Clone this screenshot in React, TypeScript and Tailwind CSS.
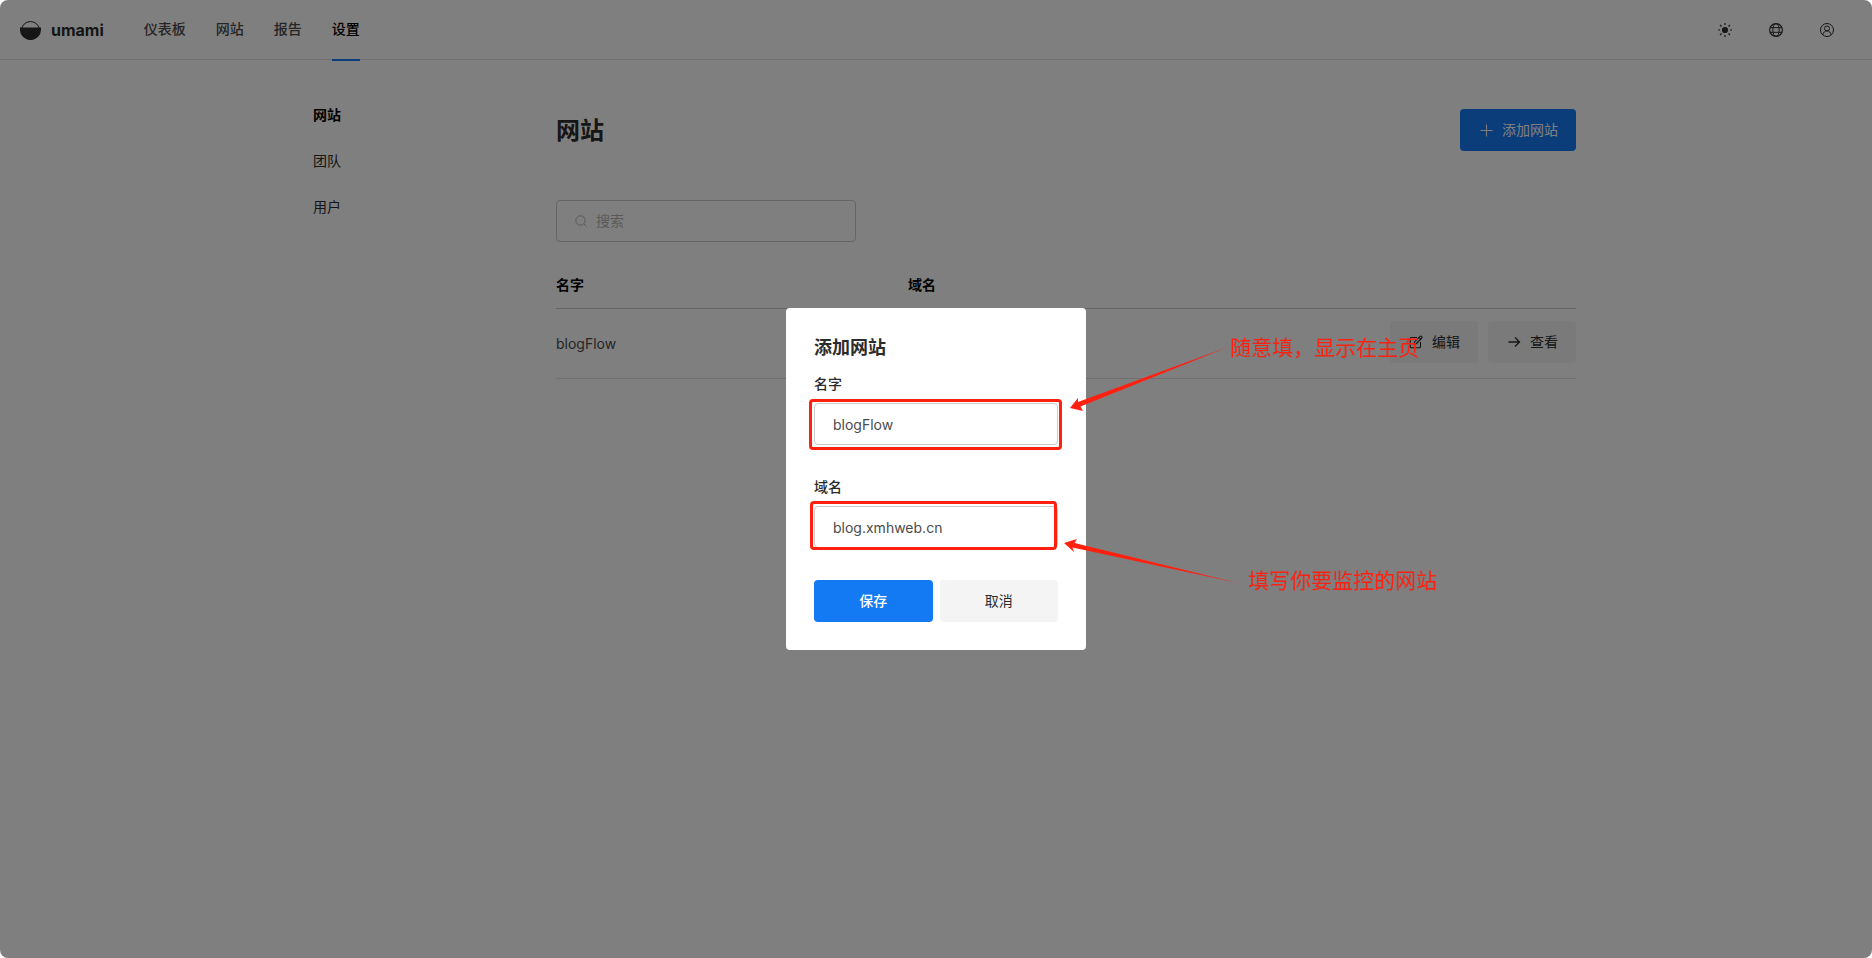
import { ReactNode, useState } from 'react';

const NAV_ITEMS = ['仪表板', '网站', '报告', '设置'];
const MENU_ITEMS = ['网站', '团队', '用户'];

function Logo() {
  return (
    <svg className="w-[21px] h-[21px]" viewBox="0 0 21 21">
      <circle cx="10.5" cy="10.5" r="9" fill="none" stroke="#2c2c2c" strokeWidth="1" />
      <path d="M0 7.500h21v2.500a10.500 10 0 0 1-21 0z" fill="#2c2c2c" />
    </svg>
  );
}

function SunIcon() {
  return (
    <svg className="w-3.5 h-3.5" viewBox="0 0 14 14" fill="none" stroke="currentColor" strokeWidth="1.2">
      <circle cx="7" cy="7" r="3.1" fill="currentColor" stroke="none" />
      <path d="M7 0v2M7 12v2M0 7h2M12 7h2M2 2l1.5 1.5M10.5 10.5L12 12M2 12l1.5-1.5M10.5 3.5L12 2" />
    </svg>
  );
}

function GlobeIcon() {
  return (
    <svg className="w-3.5 h-3.5" viewBox="0 0 14 14" fill="none" stroke="currentColor" strokeWidth="1">
      <circle cx="7" cy="7" r="6.4" strokeWidth="1.200" />
      <ellipse cx="7" cy="7" rx="3.2" ry="6.4" />
      <path d="M1.200 4.700h11.600M1.200 9.300h11.600" />
    </svg>
  );
}

function ProfileIcon() {
  return (
    <svg className="w-3.5 h-3.5" viewBox="0 0 14 14" fill="none" stroke="currentColor" strokeWidth="1">
      <circle cx="7" cy="7" r="6.5" />
      <circle cx="7" cy="5.4" r="2.5" />
      <path d="M2.9 11.8c.3-2.3 1.9-3.9 4.1-3.9s3.8 1.6 4.1 3.9" />
    </svg>
  );
}

function PlusIcon() {
  return (
    <svg className="w-4 h-4" viewBox="0 0 16 16" fill="none" stroke="currentColor">
      <path d="M8.5 2.5v12M2.5 8.5h12" />
    </svg>
  );
}

function SearchIcon() {
  return (
    <svg className="w-4 h-4 shrink-0" viewBox="0 0 16 16" fill="none" stroke="currentColor">
      <circle cx="7.5" cy="7.5" r="4.7" />
      <path d="M10.9 10.9l2.6 2.6" />
    </svg>
  );
}

function EditIcon() {
  return (
    <svg className="w-4 h-4" viewBox="0 0 16 16" fill="none" stroke="currentColor" strokeWidth="1.1">
      <path d="M9 3.5H3.2a1 1 0 0 0-1 1v8.3a1 1 0 0 0 1 1h8.3a1 1 0 0 0 1-1V8" />
      <path d="M6 10.2l.5-2.3 5.6-5.6a1 1 0 0 1 1.4 0l.3.3a1 1 0 0 1 0 1.4L8.3 9.7z" />
      <path d="M11 3.4l1.8 1.8" />
    </svg>
  );
}

function ArrowRightIcon() {
  return (
    <svg className="w-4 h-4" viewBox="0 0 16 16" fill="none" stroke="currentColor" strokeWidth="1.3">
      <path d="M2.5 8h11M9 3.5L13.5 8 9 12.5" />
    </svg>
  );
}

function RowButton({ icon, children }: { icon: ReactNode; children: ReactNode }) {
  return (
    <button className="flex items-center gap-2 h-[42px] px-[18px] rounded bg-[#f4f4f4] text-[#2c2c2c]">
      {icon}
      {children}
    </button>
  );
}

interface FieldProps {
  id: string;
  label: string;
  value: string;
  onChange: (value: string) => void;
  children: ReactNode;
}

function Field({ id, label, value, onChange, children }: FieldProps) {
  return (
    <div className="relative mb-8">
      <label htmlFor={id} className="block h-[29px] leading-5 font-medium text-[#2c2c2c]">
        {label}
      </label>
      <input
        id={id}
        value={value}
        onChange={(e) => onChange(e.target.value)}
        className="block w-full h-[42px] px-[18px] border border-[#cacaca] rounded text-[#4b4b4b] outline-none"
      />
      {children}
    </div>
  );
}

function AddWebsiteModal() {
  const [name, setName] = useState('blogFlow');
  const [domain, setDomain] = useState('blog.xmhweb.cn');

  return (
    <div className="fixed inset-0 flex items-center justify-center bg-black/50 rounded-lg">
      <form
        role="dialog"
        aria-labelledby="modal-title"
        onSubmit={(e) => e.preventDefault()}
        className="w-[300px] p-7 bg-white rounded"
      >
        <h2 id="modal-title" className="mb-3.5 text-lg leading-6 font-bold text-[#2c2c2c]">
          添加网站
        </h2>

        <Field id="name" label="名字" value={name} onChange={setName}>
          <div className="absolute left-[-5px] top-[25px] w-[253px] h-[51px] border-3 border-[#ff2010] rounded pointer-events-none" />
          {/* Arrow from the note to the field */}
          <svg className="absolute left-64 top-[-29px] w-40 h-[70px] pointer-events-none" viewBox="0 0 160 70" fill="#ff2010">
            <path d="M0 63L8 53 8 57 158 2 10.5 61.5 13 66z" />
          </svg>
          <p className="absolute left-[416px] top-[-42px] text-[21px] leading-8 whitespace-nowrap text-[#ff2010] pointer-events-none">
            随意填，显示在主页
          </p>
        </Field>

        <Field id="domain" label="域名" value={domain} onChange={setDomain}>
          <div className="absolute left-[-4px] top-6 w-[247px] h-[49px] border-3 border-[#ff2010] rounded pointer-events-none" />
          <svg className="absolute left-[250px] top-[58px] w-[176px] h-[52px] pointer-events-none" viewBox="0 0 176 52" fill="#ff2010">
            <path d="M0 8L13 4 10.5 8 174 48 8.5 12.5 10 17z" />
          </svg>
          <p className="absolute left-[434px] top-[88px] text-[21px] leading-8 whitespace-nowrap text-[#ff2010] pointer-events-none">
            填写你要监控的网站
          </p>
        </Field>

        <div className="grid grid-cols-2 gap-[7px]">
          <button type="submit" className="h-[42px] rounded bg-[#147af3] text-white font-medium">
            保存
          </button>
          <button type="button" className="h-[42px] rounded bg-[#f4f4f4] text-[#2c2c2c]">
            取消
          </button>
        </div>
      </form>
    </div>
  );
}

export default function App() {
  return (
    <div className="min-h-screen bg-white text-sm text-[#2c2c2c] font-['Inter','Noto_Sans_CJK_SC',sans-serif]">
      {/* Header */}
      <header className="flex items-start h-[60px] px-5 border-b border-[#e1e1e1]">
        <a href="#" className="flex items-center gap-2.5 h-[60px] text-base font-bold">
          <Logo />
          umami
        </a>
        <nav className="flex gap-[30px] ml-10">
          {NAV_ITEMS.map((item) => (
            <a
              key={item}
              href="#"
              className={`flex items-center h-[61px] pb-0.5 border-b-2 font-medium ${
                item === '设置' ? 'border-[#147af3] text-black' : 'border-transparent text-[#4b4b4b]'
              }`}
            >
              {item}
            </a>
          ))}
        </nav>
        <div className="flex ml-auto">
          <button aria-label="主题" className="flex items-center justify-center w-[51px] h-[60px]">
            <SunIcon />
          </button>
          <button aria-label="语言" className="flex items-center justify-center w-[51px] h-[60px]">
            <GlobeIcon />
          </button>
          <button aria-label="个人资料" className="flex items-center justify-center w-[51px] h-[60px]">
            <ProfileIcon />
          </button>
        </div>
      </header>

      <div className="flex max-w-[1280px] mx-auto">
        {/* Side menu */}
        <nav className="w-[260px] shrink-0 pt-8">
          {MENU_ITEMS.map((item, i) => (
            <a
              key={item}
              href="#"
              className={`flex items-center h-[46px] px-[17px] ${i === 0 ? 'font-bold text-black' : ''}`}
            >
              {item}
            </a>
          ))}
        </nav>

        {/* Content */}
        <main className="flex-1 pt-[49px]">
          <div className="flex items-center justify-between mb-[49px]">
            <h1 className="pt-0.5 text-2xl font-bold">网站</h1>
            <button className="flex items-center gap-2 h-[42px] px-[18px] rounded bg-[#147af3] text-white">
              <PlusIcon />
              添加网站
            </button>
          </div>

          <div className="flex items-center gap-[7px] w-[300px] h-[42px] px-4 border border-[#cacaca] rounded text-[#b3b3b3]">
            <SearchIcon />
            <input
              type="search"
              aria-label="搜索"
              placeholder="搜索"
              className="w-full outline-none placeholder:text-[#b3b3b3]"
            />
          </div>

          <table className="w-full mt-5 border-separate border-spacing-0 text-left">
            <thead>
              <tr>
                <th className="w-[352px] h-[47px] border-b border-[#cacaca] font-bold text-black">名字</th>
                <th className="border-b border-[#cacaca] font-bold text-black">域名</th>
                <th className="border-b border-[#cacaca]" />
              </tr>
            </thead>
            <tbody>
              <tr>
                <td className="h-[70px] border-b border-[#e1e1e1] text-[#4b4b4b]">blogFlow</td>
                <td className="border-b border-[#e1e1e1] text-[#4b4b4b]">blog.xmhweb.cn</td>
                <td className="pt-3 align-top border-b border-[#e1e1e1]">
                  <div className="flex justify-end gap-2.5">
                    <RowButton icon={<EditIcon />}>编辑</RowButton>
                    <RowButton icon={<ArrowRightIcon />}>查看</RowButton>
                  </div>
                </td>
              </tr>
            </tbody>
          </table>
        </main>
      </div>

      <AddWebsiteModal />
    </div>
  );
}
